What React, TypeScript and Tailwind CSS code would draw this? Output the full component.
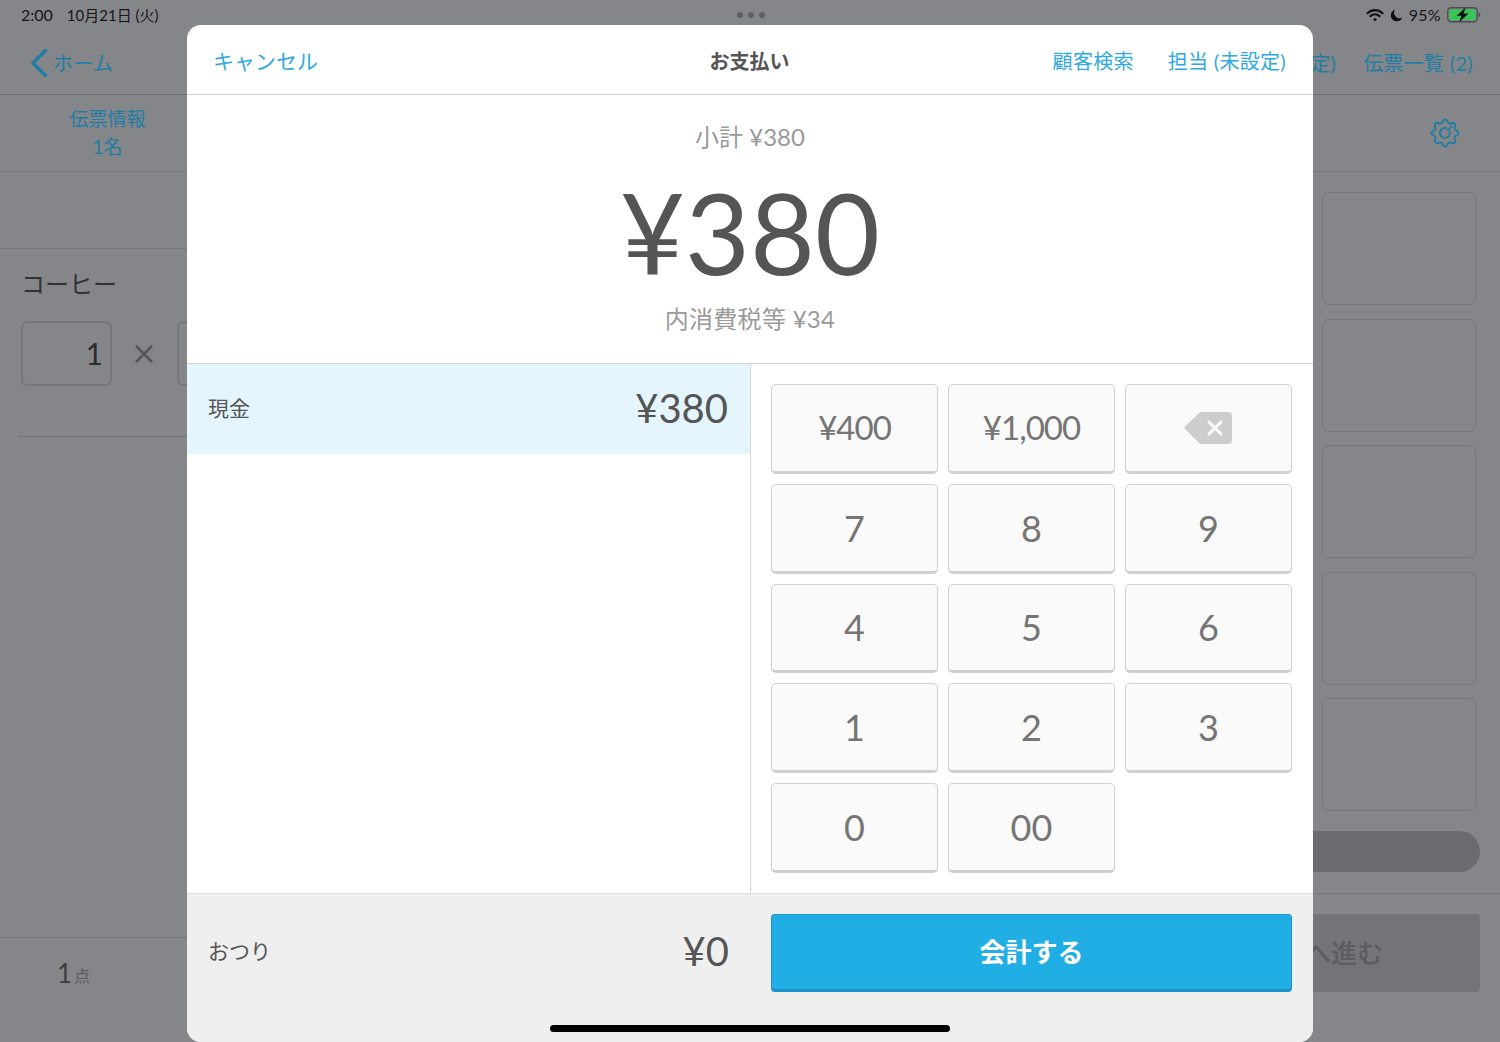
const fontStack = { fontFamily: '"Lato", "Noto Sans CJK JP", sans-serif' };

const keys = ['¥400', '¥1,000', 'back', '7', '8', '9', '4', '5', '6', '1', '2', '3', '0', '00'];

function WifiIcon() {
  return (
    <svg width="18" height="14" viewBox="0 0 18 14" fill="none" stroke="#111" strokeWidth="2.2" strokeLinecap="round">
      <path d="M1.5 5.2a10.8 10.8 0 0 1 15 0" />
      <path d="M4.4 8.1a6.6 6.6 0 0 1 9.2 0" />
      <circle cx="9" cy="11.6" r="1.1" fill="#111" strokeWidth="0.8" />
    </svg>
  );
}

function MoonIcon() {
  return (
    <svg width="13" height="13" viewBox="0 0 13 13">
      <path d="M5 .6a6 6 0 1 0 7.4 7.9A5.6 5.6 0 0 1 5 .6z" fill="#111" />
    </svg>
  );
}

function BatteryIcon() {
  return (
    <svg width="34" height="16" viewBox="0 0 34 16">
      <rect x="0.75" y="0.75" width="29.5" height="14" rx="3.5" fill="none" stroke="#4c4d50" strokeWidth="1.3" />
      <rect x="2.5" y="2.5" width="26" height="10.5" rx="1.5" fill="#37c759" />
      <path d="M31.7 5.5c1.2.3 1.6 1.2 1.6 2.2s-.4 2-1.6 2.3z" fill="#4c4d50" />
      <path d="M18.5 0.5 9.5 8.8h4.8l-2 6.4 9.2-8.6h-4.9z" fill="#111" />
    </svg>
  );
}

function GearIcon() {
  // outline is a radial wave with eight lobes
  const points: string[] = [];
  for (let i = 0; i < 160; i++) {
    const t = (i / 160) * Math.PI * 2;
    const r = 11.9 + 1.5 * Math.cos(8 * t);
    points.push(`${(15 + r * Math.sin(t)).toFixed(2)},${(15 - r * Math.cos(t)).toFixed(2)}`);
  }
  return (
    <svg width="30" height="30" viewBox="0 0 30 30" fill="none" stroke="#1f7da3" strokeWidth="1.9">
      <polygon points={points.join(' ')} strokeLinejoin="round" />
      <path d="M19.7 13.4a5 5 0 1 1-3.4-3.3" strokeLinecap="round" />
      <path d="M18 11.8 21.5 8.4" strokeLinecap="round" />
    </svg>
  );
}

function BackspaceIcon() {
  return (
    <svg width="49" height="34" viewBox="0 0 49 34">
      <path d="M16 1h28a4 4 0 0 1 4 4v24a4 4 0 0 1-4 4H16L1 18a2 2 0 0 1 0-2.6z" fill="#cdcdcd" />
      <path d="M25 11 37 23M37 11 25 23" stroke="#fafafa" strokeWidth="3" strokeLinecap="round" />
    </svg>
  );
}

function Key({ label }: { label: string }) {
  return (
    <button className="flex items-center justify-center rounded-[5px] border border-b-[3px] border-[#d0d0d0] bg-[#fafafa] text-[36px] text-[#757575]">
      {label === 'back' ? (
        <BackspaceIcon />
      ) : label.startsWith('¥') ? (
        <span className="text-[33px] tracking-[-0.03em]">{label}</span>
      ) : (
        label
      )}
    </button>
  );
}

function Background() {
  return (
    <div className="flex h-full flex-col bg-[#85868a]">
      <div className="grid h-[30px] shrink-0 grid-cols-3 items-center pl-[21px] pr-[19px] text-[15px] text-[#151517]">
        <span className="flex items-center gap-[14px]">
          <span className="text-[16px]">2:00</span>
          <span>10月21日 (火)</span>
        </span>
        <div className="flex justify-center gap-[5px]">
          <span className="size-[6px] rounded-full bg-[#5f6064]" />
          <span className="size-[6px] rounded-full bg-[#5f6064]" />
          <span className="size-[6px] rounded-full bg-[#5f6064]" />
        </div>
        <span className="flex items-center justify-end gap-[6px]">
          <WifiIcon />
          <MoonIcon />
          <span className="text-[16px] tracking-[0.3px]">95%</span>
          <BatteryIcon />
        </span>
      </div>

      <div className="flex h-[65px] shrink-0 items-center justify-between border-b border-[#6f7074] pt-[2px] pl-[30px] pr-[27px] text-[20px] tracking-[0.3px] text-[#1f7da3]">
        <div className="flex items-center gap-[5px]">
          <svg width="18" height="30" viewBox="0 0 18 30" fill="none" stroke="#1f7da3" strokeWidth="3.4" strokeLinecap="round" strokeLinejoin="round">
            <path d="M15.5 2.5 3 15l12.5 12.5" />
          </svg>
          <span>ホーム</span>
        </div>
        <div className="flex gap-[27px]">
          <span>担当 (未設定)</span>
          <span>伝票一覧 (2)</span>
        </div>
      </div>

      <div className="flex h-[77px] shrink-0 items-center justify-between border-b border-[#77787c] pr-[40px]">
        <div className="w-[215px] text-center text-[19px] leading-[28px] text-[#1f7da3]">
          <div>伝票情報</div>
          <div>1名</div>
        </div>
        <GearIcon />
      </div>

      <div className="flex flex-1">
        <div className="flex w-[1313px] shrink-0 flex-col">
          <div className="h-[77px] shrink-0 border-b border-[#77787c]" />
          <div className="ml-[18px] h-[188px] shrink-0 border-b border-[#6f7074] pl-[3px] pt-[20px]">
            <div className="text-[24px] leading-[30px] text-[#303134]">コーヒー</div>
            <div className="mt-[22px] flex items-center">
              <div className="flex h-[65px] w-[91px] items-center justify-end rounded-[6px] border-2 border-[#77787c] pr-[7px] text-[30px] text-[#2b2c2f]">
                1
              </div>
              <svg className="ml-[22px]" width="20" height="20" viewBox="0 0 20 20" stroke="#55565a" strokeWidth="2.6">
                <path d="M2 2l16 16M18 2 2 18" />
              </svg>
              <div className="ml-[23px] h-[65px] flex-1 rounded-[6px] border-2 border-[#77787c]" />
            </div>
          </div>
          <div className="mt-auto flex h-[105px] items-center border-t border-[#77787c] pb-[34px] pl-[57px] text-[#3b3c3f]">
            <span className="text-[26px]">1</span>
            <span className="ml-[2px] mt-[6px] text-[16px] text-[#5a5b5f]">点</span>
          </div>
        </div>

        <div className="flex min-w-0 flex-1 flex-col pt-[20px]">
          <div className="flex flex-col gap-[13.5px] pl-[9px] pr-[24px]">
            <div className="h-[113px] rounded-[6px] border border-[#77787c]" />
            <div className="h-[113px] rounded-[6px] border border-[#77787c]" />
            <div className="h-[113px] rounded-[6px] border border-[#77787c]" />
            <div className="h-[113px] rounded-[6px] border border-[#77787c]" />
            <div className="h-[113px] rounded-[6px] border border-[#77787c]" />
          </div>
          <div className="mr-[20px] mt-[20px] h-[41px] rounded-r-full bg-[#6a6b6f]" />
          <div className="mt-[21px] flex-1 border-t border-[#77787c] pr-[20px] pt-[20px]">
            <div className="flex h-[78px] items-center justify-end overflow-hidden rounded-r-[4px] bg-[#737478] pr-[97px] text-[26px] font-medium whitespace-nowrap text-[#5b5c60]">
              へ進む
            </div>
          </div>
        </div>
      </div>
    </div>
  );
}

function PaymentModal() {
  return (
    <div className="absolute left-[187px] top-[25px] flex h-[1017px] w-[1126px] flex-col overflow-hidden rounded-[14px] bg-white">
      <header className="flex h-[70px] shrink-0 items-center border-b border-[#cfcfcf] pl-[26px] pr-[27px] pt-[3px] text-[20px] text-[#2fa9e0]">
        <span className="w-[300px] text-[21px]">キャンセル</span>
        <span className="flex-1 text-center text-[20px] font-bold text-[#555555]">お支払い</span>
        <span className="flex w-[300px] justify-end gap-[34px] tracking-[0.3px]">
          <span>顧客検索</span>
          <span>担当 (未設定)</span>
        </span>
      </header>

      <section className="flex h-[269px] shrink-0 flex-col items-center border-b border-[#d2d2d2]">
        <div className="mt-[25px] text-[24px] leading-[34px] text-[#9a9a9a]">小計 ¥380</div>
        <div className="mt-[13px] text-[112px] leading-[130px] text-[#555555]">¥380</div>
        <div className="mt-[5px] text-[24px] leading-[34px] tracking-[0.3px] text-[#9a9a9a]">内消費税等 ¥34</div>
      </section>

      <section className="flex flex-1">
        <div className="w-[564px] shrink-0 border-r border-[#d9d9d9]">
          <div className="flex h-[90px] items-center justify-between bg-[#e4f5fd] pb-[3px] pl-[21px] pr-[22px] text-[#555555]">
            <span className="text-[21px]">現金</span>
            <span className="text-[40px]">¥380</span>
          </div>
        </div>
        <div className="grid flex-1 grid-cols-3 grid-rows-5 gap-x-[10px] gap-y-[10px] pb-[20px] pl-[20px] pr-[21px] pt-[20px]">
          {keys.map((k) => (
            <Key key={k} label={k} />
          ))}
        </div>
      </section>

      <footer className="flex h-[149px] shrink-0 border-t border-[#dcdcdc] bg-[#efefef]">
        <div className="flex h-[114px] w-[564px] shrink-0 items-center justify-between pl-[21px] pr-[22px] text-[#555555]">
          <span className="text-[21px]">おつり</span>
          <span className="text-[40px]">¥0</span>
        </div>
        <div className="flex-1 pl-[20px] pr-[21px] pt-[20px]">
          <button className="flex h-[78px] w-full items-center justify-center rounded-[4px] border border-b-[3px] border-[#1b93c9] bg-[#20aee4] text-[26px] font-semibold text-white">
            会計する
          </button>
        </div>
      </footer>

      <div className="absolute bottom-[10px] left-[363px] h-[7px] w-[400px] rounded-full bg-black" />
    </div>
  );
}

export default function App() {
  return (
    <div className="relative h-[1042px] w-[1500px] overflow-hidden" style={fontStack}>
      <Background />
      <PaymentModal />
    </div>
  );
}
